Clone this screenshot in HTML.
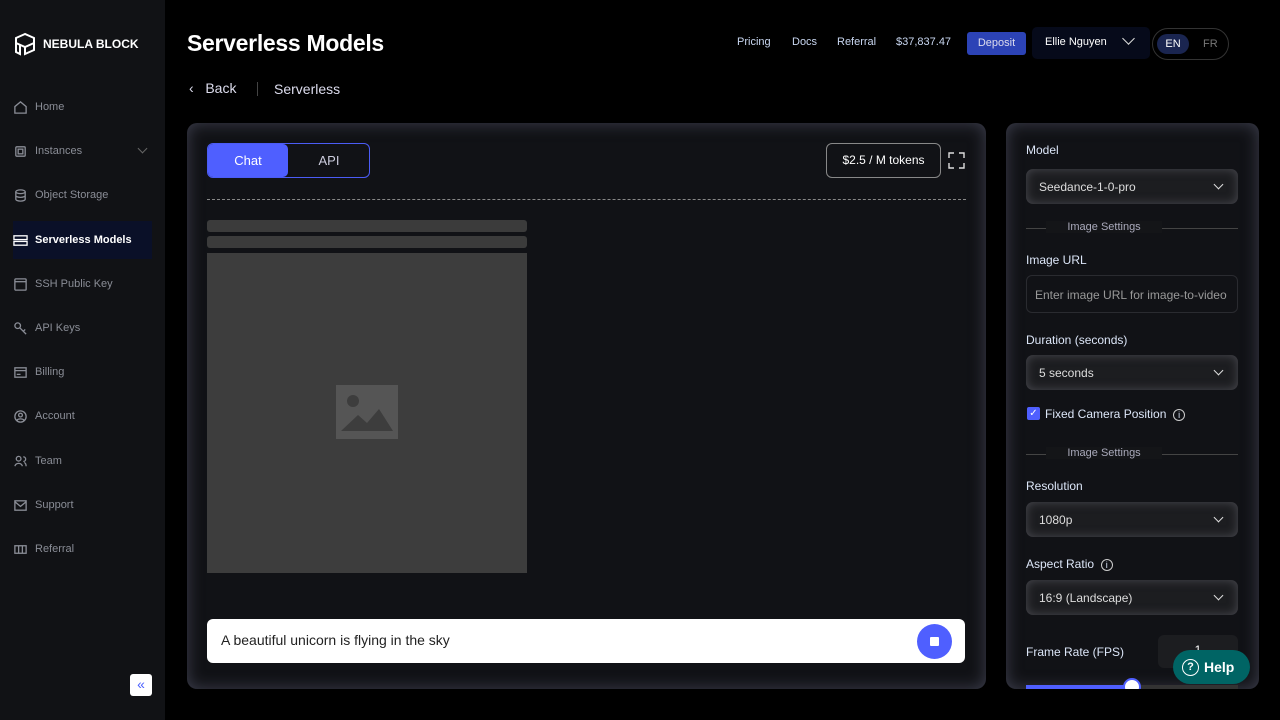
<!DOCTYPE html>
<html><head><meta charset="utf-8"><style>
*{box-sizing:border-box;margin:0;padding:0}
body{width:1280px;height:720px;background:#000;font-family:"Liberation Sans",sans-serif;color:#fff;position:relative;overflow:hidden}
.side{position:absolute;left:0;top:0;width:165px;height:720px;background:#111215}
.logo{position:absolute;left:13px;top:32px;display:flex;align-items:center;gap:6px;font-weight:bold;font-size:12px}
.nav{position:absolute;left:13px;font-size:11px;color:#8a8d96;display:flex;align-items:center;gap:7px;width:139px;height:38px;padding-left:0}
.nav svg{width:15px;height:15px;stroke:#8a8d96;fill:none;stroke-width:1.4}
.nav.act{background:#0a1028;color:#fff;font-weight:bold}
.nav.act svg{stroke:#fff}
.panel{position:absolute;background:#111216;border-radius:10px;box-shadow:inset 0 0 16px rgba(100,102,125,.55)}
.top a{position:absolute;top:36px;font-size:11px;color:#c8d6f0}
.sel{position:absolute;left:20px;width:212px;height:35px;border-radius:7px;background:#1c1d20;box-shadow:inset 0 0 10px rgba(120,120,130,.5);font-size:12px;color:#ddd;padding:11px 13px}
.sel:after{content:"";position:absolute;right:16px;top:12px;width:6px;height:6px;border-right:1.3px solid #ddd;border-bottom:1.3px solid #ddd;transform:rotate(45deg)}
.lbl{position:absolute;left:20px;font-size:12px;color:#dce6f8}
.div{position:absolute;left:20px;width:212px;height:1px;background:#444}
.div span{position:absolute;left:20px;top:-7px;width:116px;background:#141518;text-align:center;font-size:11px;color:#aab;}
</style></head><body>
<div class="side">
<div class="logo"><svg width="24" height="24" viewBox="0 0 24 24" fill="none" stroke="#fff" stroke-width="2"><path d="M12 2L3 6v5l9 4 9-4V6z"/><path d="M3 11v9l4 2v-9M12 15v7l9-4v-7"/></svg>NEBULA BLOCK</div>
<div class="nav" style="top:88px"><svg viewBox="0 0 16 16"><path d="M2 7l6-5 6 5v7H2z"/></svg>Home</div>
<div class="nav" style="top:132px"><svg viewBox="0 0 16 16"><rect x="3" y="3" width="10" height="10" rx="1"/><rect x="5.5" y="5.5" width="5" height="5"/></svg>Instances<span style="position:absolute;right:6px;top:13px;width:7px;height:7px;border-right:1px solid #666;border-bottom:1px solid #666;transform:rotate(45deg)"></span></div>
<div class="nav" style="top:176px"><svg viewBox="0 0 16 16"><ellipse cx="8" cy="4" rx="5" ry="2"/><path d="M3 4v8c0 1 2 2 5 2s5-1 5-2V4M3 8c0 1 2 2 5 2s5-1 5-2"/></svg>Object Storage</div>
<div class="nav act" style="top:221px"><svg viewBox="0 0 16 16"><rect x="1" y="3" width="14" height="4"/><rect x="1" y="9" width="14" height="4"/></svg>Serverless Models</div>
<div class="nav" style="top:265px"><svg viewBox="0 0 16 16"><rect x="2" y="2" width="12" height="12" rx="1"/><path d="M2 5h12"/></svg>SSH Public Key</div>
<div class="nav" style="top:309px"><svg viewBox="0 0 16 16"><circle cx="5" cy="5" r="3"/><path d="M7 7l7 7M11 11l2-2"/></svg>API Keys</div>
<div class="nav" style="top:353px"><svg viewBox="0 0 16 16"><rect x="2" y="3" width="12" height="10"/><path d="M2 6h12M4 10h4"/></svg>Billing</div>
<div class="nav" style="top:397px"><svg viewBox="0 0 16 16"><circle cx="8" cy="8" r="6"/><circle cx="8" cy="6.5" r="2"/><path d="M4 12c2-2 6-2 8 0"/></svg>Account</div>
<div class="nav" style="top:442px"><svg viewBox="0 0 16 16"><circle cx="6" cy="5" r="2.5"/><path d="M2 13c1-4 7-4 8 0M11 3a2.5 2.5 0 010 5M12 9c2 1 2 3 2 4"/></svg>Team</div>
<div class="nav" style="top:486px"><svg viewBox="0 0 16 16"><rect x="2" y="3" width="12" height="10"/><path d="M2 4l6 5 6-5"/></svg>Support</div>
<div class="nav" style="top:530px"><svg viewBox="0 0 16 16"><rect x="2" y="4" width="12" height="8"/><path d="M6 4v8M10 4v8"/></svg>Referral</div>
<div style="position:absolute;left:130px;top:674px;width:22px;height:22px;background:#fff;border-radius:3px;color:#4a60ff;font-size:14px;text-align:center;line-height:20px">«</div>
</div>
<div style="position:absolute;left:187px;top:30px;font-size:23px;font-weight:bold;letter-spacing:-0.3px">Serverless Models</div>
<div class="top"><a style="left:737px">Pricing</a><a style="left:792px">Docs</a><a style="left:837px">Referral</a><a style="left:896px">$37,837.47</a></div>
<div style="position:absolute;left:967px;top:32px;width:59px;height:23px;background:#2c43b6;border-radius:3px;font-size:11px;text-align:center;line-height:22px;color:#dde">Deposit</div>
<div style="position:absolute;left:1032px;top:27px;width:118px;height:32px;background:#060a1a;border-radius:5px;font-size:11px;padding:9px 13px">Ellie Nguyen<span style="position:absolute;right:17px;top:7px;width:9px;height:9px;border-right:1.5px solid #ddd;border-bottom:1.5px solid #ddd;transform:rotate(45deg)"></span></div>
<div style="position:absolute;left:1152px;top:28px;width:77px;height:32px;border:1px solid #333;border-radius:16px"><div style="position:absolute;left:4px;top:5px;width:32px;height:20px;background:#1a2550;border-radius:10px;font-size:11px;text-align:center;line-height:20px">EN</div><div style="position:absolute;left:50px;top:9px;font-size:11px;color:#777">FR</div></div>
<div style="position:absolute;left:189px;top:80px;font-size:14px;color:#dde">‹&nbsp;&nbsp;&nbsp;Back</div>
<div style="position:absolute;left:257px;top:82px;width:1px;height:14px;background:#444"></div>
<div style="position:absolute;left:274px;top:81px;font-size:14px;color:#dde">Serverless</div>
<div class="panel" style="left:187px;top:123px;width:799px;height:566px">
<div style="position:absolute;left:20px;top:20px;width:163px;height:35px;border:1px solid #4b5cf5;border-radius:6px"><div style="position:absolute;left:0;top:0;width:80px;height:33px;background:#4f5fff;border-radius:5px;font-size:13px;text-align:center;line-height:33px">Chat</div><div style="position:absolute;left:80px;top:0;width:82px;text-align:center;line-height:33px;font-size:13px;color:#ccd">API</div></div>
<div style="position:absolute;left:639px;top:20px;width:115px;height:35px;border:1px solid #888;border-radius:6px;font-size:12px;text-align:center;line-height:33px">$2.5 / M tokens</div>
<svg style="position:absolute;left:761px;top:29px" width="17" height="17" viewBox="0 0 17 17" fill="none" stroke="#ddd" stroke-width="1.4"><path d="M1 6V1h5M11 1h5v5M16 11v5h-5M6 16H1v-5"/></svg>
<div style="position:absolute;left:20px;top:76px;width:759px;border-top:1px dashed #888"></div>
<div style="position:absolute;left:20px;top:97px;width:320px;height:12px;background:#3b3b3b;border-radius:3px"></div>
<div style="position:absolute;left:20px;top:113px;width:320px;height:12px;background:#3b3b3b;border-radius:3px"></div>
<div style="position:absolute;left:20px;top:130px;width:320px;height:320px;background:#3d3d3d"><svg style="position:absolute;left:129px;top:132px" width="62" height="54" viewBox="0 0 62 54"><rect width="62" height="54" fill="#555"/><circle cx="17" cy="16" r="6" fill="#3d3d3d"/><path d="M5 46l17-16 9 8 12-14 14 22z" fill="#3d3d3d"/></svg></div>
<div style="position:absolute;left:20px;top:496px;width:758px;height:44px;background:#fff;border-radius:6px;color:#222;font-size:14px;padding:13px 14px">A beautiful unicorn is flying in the sky<div style="position:absolute;right:13px;top:5px;width:35px;height:35px;border-radius:50%;background:#4f5fff"><div style="position:absolute;left:13px;top:13px;width:9px;height:9px;background:#fff;border-radius:1px"></div></div></div>
</div>
<div class="panel" style="left:1006px;top:123px;width:253px;height:566px;overflow:hidden">
<div class="lbl" style="top:20px">Model</div>
<div class="sel" style="top:46px">Seedance-1-0-pro</div>
<div class="div" style="top:105px"><span>Image Settings</span></div>
<div class="lbl" style="top:130px">Image URL</div>
<div style="position:absolute;left:20px;top:152px;width:212px;height:38px;border:1px solid #2a2b30;border-radius:6px;font-size:12px;color:#999;padding:12px 8px">Enter image URL for image-to-video</div>
<div class="lbl" style="top:210px">Duration (seconds)</div>
<div class="sel" style="top:232px">5 seconds</div>
<div style="position:absolute;left:21px;top:284px;width:13px;height:13px;background:#4f5fff;border-radius:2px;color:#fff;font-size:10px;text-align:center;line-height:13px">✓</div>
<div class="lbl" style="left:39px;top:284px">Fixed Camera Position&nbsp; <span style="display:inline-block;width:12px;height:12px;border:1px solid #ccc;border-radius:50%;font-size:9px;text-align:center;line-height:10px">i</span></div>
<div class="div" style="top:331px"><span>Image Settings</span></div>
<div class="lbl" style="top:356px">Resolution</div>
<div class="sel" style="top:379px">1080p</div>
<div class="lbl" style="top:434px">Aspect Ratio&nbsp; <span style="display:inline-block;width:12px;height:12px;border:1px solid #ccc;border-radius:50%;font-size:9px;text-align:center;line-height:10px">i</span></div>
<div class="sel" style="top:457px">16:9 (Landscape)</div>
<div class="lbl" style="top:522px">Frame Rate (FPS)</div>
<div style="position:absolute;left:152px;top:512px;width:80px;height:33px;background:#1c1d20;border-radius:6px;text-align:center;font-size:12px;line-height:30px">1</div>
<div style="position:absolute;left:20px;top:562px;width:212px;height:6px;background:#333"><div style="width:106px;height:6px;background:#4f5fff"></div></div>
<div style="position:absolute;left:117px;top:555px;width:18px;height:18px;border-radius:50%;background:#fff;border:2px solid #4f5fff"></div>
</div>
<div style="position:absolute;left:1173px;top:650px;width:77px;height:34px;background:#006464;border-radius:17px 17px 17px 17px;font-size:14px;font-weight:bold;padding:8px 9px;display:flex;align-items:center;gap:5px"><span style="display:inline-block;width:17px;height:17px;border:1.5px solid #fff;border-radius:50%;font-size:11px;text-align:center;line-height:14px">?</span>Help</div>
</body></html>
